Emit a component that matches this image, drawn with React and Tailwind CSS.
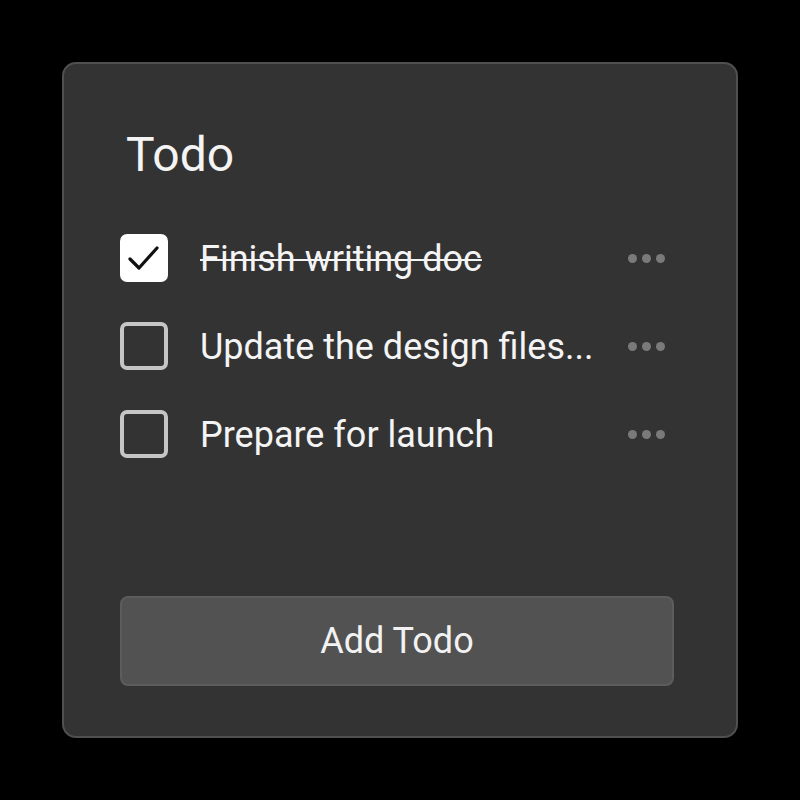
const todos = [
  { id: 1, text: 'Finish writing doc', done: true },
  { id: 2, text: 'Update the design files...', done: false },
  { id: 3, text: 'Prepare for launch', done: false },
];

const Dots = () => (
  <div className="flex items-center gap-[5px] mr-[9px]">
    <span className="w-[9px] h-[9px] rounded-full bg-[#7a7a7a]" />
    <span className="w-[9px] h-[9px] rounded-full bg-[#7a7a7a]" />
    <span className="w-[9px] h-[9px] rounded-full bg-[#7a7a7a]" />
  </div>
);

const Checkbox = ({ checked }) =>
  checked ? (
    <div className="w-12 h-12 shrink-0 rounded-[7px] bg-white flex items-center justify-center">
      <svg width="48" height="48" viewBox="0 0 48 48" fill="none">
        <path d="M10 25 L19 34 L37 14" stroke="#111" strokeWidth="3.2" strokeLinecap="round" strokeLinejoin="round" />
      </svg>
    </div>
  ) : (
    <div className="w-12 h-12 shrink-0 rounded-[7px] border-4 border-[#c6c6c6]" />
  );

export default function App() {
  return (
    <div className="w-[800px] h-[800px] bg-black flex items-center justify-center font-['Roboto',sans-serif]">
      <div className="w-[676px] h-[676px] bg-[#333333] border-2 border-[#505050] rounded-[14px] flex flex-col pt-[67px] pb-[50px] pl-[56px] pr-[62px]">
        <h1 className="text-[48px] leading-[48px] text-[#f4f4f4] ml-[6px]">Todo</h1>

        <ul className="mt-[55px] flex flex-col gap-10">
          {todos.map(t => (
            <li key={t.id} className="flex items-center h-12">
              <Checkbox checked={t.done} />
              <span
                className={`ml-8 flex-1 text-[36px] leading-[48px] pt-[2px] text-[#f4f4f4] ${t.done ? 'line-through decoration-2' : ''}`}
              >
                {t.text}
              </span>
              <Dots />
            </li>
          ))}
        </ul>

        <button className="mt-auto h-[90px] w-full rounded-[8px] bg-[#525252] border-2 border-[#5c5c5c] text-[36px] text-[#f2f2f2]">
          Add Todo
        </button>
      </div>
    </div>
  );
}
